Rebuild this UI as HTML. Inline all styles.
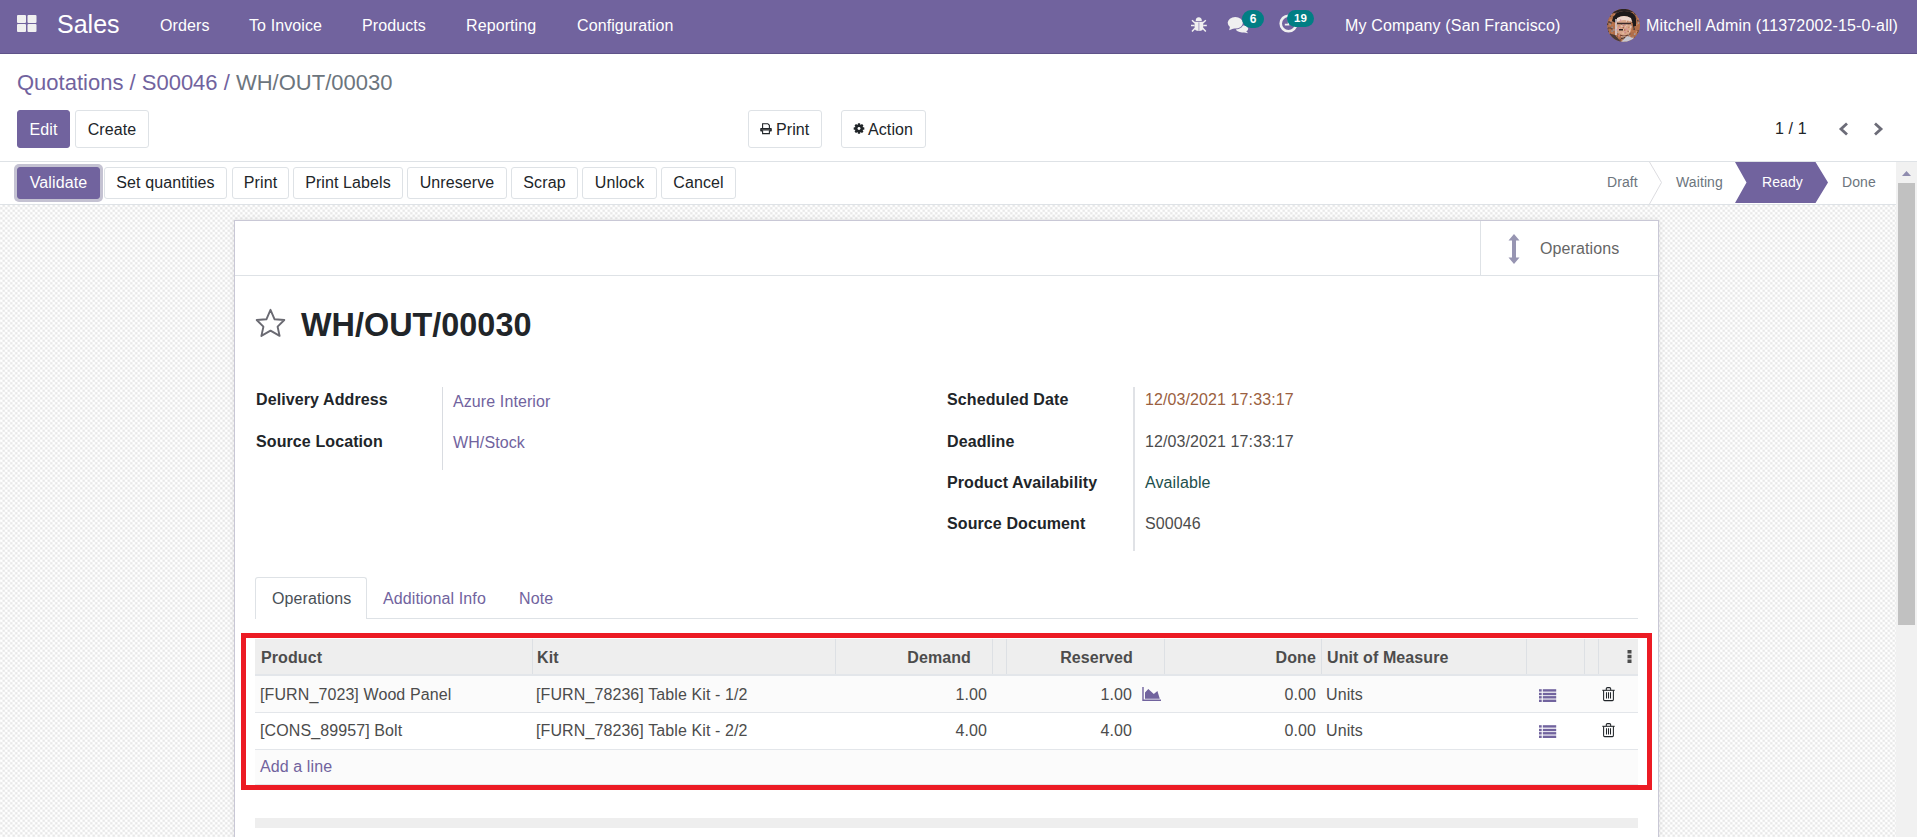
<!DOCTYPE html>
<html><head><meta charset="utf-8">
<style>
*{box-sizing:border-box;margin:0;padding:0}
html,body{width:1917px;height:837px;overflow:hidden;background:#fff;font-family:"Liberation Sans",sans-serif;font-size:16px;color:#212529;letter-spacing:0.1px}
.a{position:absolute;white-space:nowrap}
#nav{position:absolute;left:0;top:0;width:1917px;height:54px;background:#71639e;border-bottom:1px solid #5f5389;color:#fff}
#nav .a{color:#fff}
#cp{position:absolute;left:0;top:54px;width:1917px;height:108px;background:#fff;border-bottom:1px solid #dee2e6}
.btn{position:absolute;height:38px;border:1px solid #dee2e6;border-radius:3px;background:#fff;color:#212529;font-size:16px;line-height:36px;padding-top:1px;text-align:center;white-space:nowrap}
.btnp{background:#71639e;border-color:#71639e;color:#fff}
.sb .btn{height:32px;line-height:30px;padding-top:0}
#content{position:absolute;left:0;top:162px;width:1896px;height:675px;background-color:#f6f6f6;background-color:#f6f6f6;background-image:radial-gradient(circle at 1.25px 1.25px,#e8e8e8 0.5px,rgba(232,232,232,0) 1.7px),radial-gradient(circle at 3.75px 3.75px,#e8e8e8 0.5px,rgba(232,232,232,0) 1.7px),radial-gradient(circle at 3.75px 1.25px,#fff 0.5px,rgba(255,255,255,0) 1.7px),radial-gradient(circle at 1.25px 3.75px,#fff 0.5px,rgba(255,255,255,0) 1.7px);background-size:5px 5px}
#sbar{position:absolute;left:0;top:162px;width:1896px;height:43px;background:#fff;border-bottom:1px solid #dee2e6}
#scroll{position:absolute;left:1896px;top:162px;width:21px;height:675px;background:#f1f1f1}
#sheet{position:absolute;left:234px;top:220px;width:1425px;height:640px;background:#fff;border:1px solid #c9c8d6;box-shadow:0 0 6px rgba(0,0,0,.09)}
.lbl{position:absolute;font-weight:bold;color:#212529;white-space:nowrap}
.val{position:absolute;color:#4c4c4c;white-space:nowrap}
.th{position:absolute;font-weight:bold;color:#4c4c4c;white-space:nowrap}
.td{position:absolute;color:#4c4c4c;white-space:nowrap}
</style></head><body>
<div id="nav">
  <svg class="a" style="left:17px;top:15px" width="20" height="17" viewBox="0 0 20 17"><rect x="0" y="0" width="9" height="8" rx="1" fill="#f0f0f0"/><rect x="10.5" y="0" width="9" height="8" rx="1" fill="#f0f0f0"/><rect x="0" y="9" width="9" height="8" rx="1" fill="#f0f0f0"/><rect x="10.5" y="9" width="9" height="8" rx="1" fill="#f0f0f0"/></svg>
  <div class="a" style="left:57px;top:10px;font-size:25px;letter-spacing:0">Sales</div>
  <div class="a" style="left:160px;top:17px">Orders</div>
  <div class="a" style="left:249px;top:17px">To Invoice</div>
  <div class="a" style="left:362px;top:17px">Products</div>
  <div class="a" style="left:466px;top:17px">Reporting</div>
  <div class="a" style="left:577px;top:17px">Configuration</div>
  <svg class="a" style="left:1190px;top:16px" width="18" height="17" viewBox="0 0 18 17"><path d="M5.7 4.9 Q5.7 1.2 8.75 1.2 Q11.8 1.2 11.8 4.9 Z" fill="#f0f0f0"/><path d="M4.6 5.7 H13.2 V12 Q13.2 14.9 8.9 14.9 Q4.6 14.9 4.6 12 Z" fill="#f0f0f0"/><rect x="8.4" y="6.4" width="1" height="8.5" fill="#a89fc6"/><path d="M5 7 L2 4.2 M12.8 7 L15.8 4.2 M4.6 9.6 L1 9.6 M13.2 9.6 L16.8 9.6 M5 12.3 L2 15.5 M12.8 12.3 L15.8 15.5" stroke="#f0f0f0" stroke-width="1.5"/></svg>
  <svg class="a" style="left:1227px;top:15px" width="22" height="19" viewBox="0 0 22 19"><ellipse cx="15" cy="13.8" rx="6.2" ry="3.6" fill="#f0f0f0"/><path d="M18.5 15.5 L21.2 18.3 L14.5 17 Z" fill="#f0f0f0"/><ellipse cx="8.3" cy="7.8" rx="8.6" ry="6.6" fill="#71639e"/><ellipse cx="8.3" cy="7.8" rx="7.6" ry="5.8" fill="#f0f0f0"/><path d="M3 11.5 L2.2 15.3 L7.8 13 Z" fill="#f0f0f0"/></svg>
  <div class="a" style="left:1242px;top:10px;width:22px;height:18px;border-radius:9px;background:#017e84;color:#fff;font-size:12px;font-weight:bold;text-align:center;line-height:19px;letter-spacing:0">6</div>
  <svg class="a" style="left:1279px;top:14px" width="19" height="19" viewBox="0 0 19 19"><circle cx="9.5" cy="9.5" r="7.8" fill="none" stroke="#f0f0f0" stroke-width="2.6"/><path d="M5.8 10.6 H9.6 V5" stroke="#f0f0f0" stroke-width="1.6" fill="none"/></svg>
  <div class="a" style="left:1287px;top:10px;width:27px;height:17px;border-radius:8.5px;background:#017e84;color:#fff;font-size:11.5px;font-weight:bold;text-align:center;line-height:17px;letter-spacing:0">19</div>
  <svg class="a" style="left:1607px;top:8.5px" width="34" height="33" viewBox="0 0 34 33"><defs><clipPath id="av"><circle cx="16.6" cy="16.3" r="16.4"/></clipPath></defs><g clip-path="url(#av)"><rect width="34" height="33" fill="#b06e4a"/><rect x="10.3" y="4.1" width="1.5" height="1.5" fill="#c27a50"/><rect x="0.7" y="26.9" width="1.5" height="1.5" fill="#8c8c96"/><rect x="11.8" y="1.0" width="1.5" height="1.5" fill="#a0a0aa"/><rect x="6.5" y="1.9" width="1.5" height="1.5" fill="#5a4a48"/><rect x="1.4" y="2.1" width="1.5" height="1.5" fill="#5a4a48"/><rect x="1.1" y="18.2" width="1.5" height="1.5" fill="#6e4a3a"/><rect x="21.1" y="18.8" width="1.5" height="1.5" fill="#8c8c96"/><rect x="19.2" y="12.5" width="1.5" height="1.5" fill="#6e4a3a"/><rect x="0.6" y="28.2" width="1.5" height="1.5" fill="#d08a5e"/><rect x="13.7" y="17.4" width="1.5" height="1.5" fill="#a0a0aa"/><rect x="9.8" y="26.7" width="1.5" height="1.5" fill="#6e4a3a"/><rect x="2.6" y="18.4" width="1.5" height="1.5" fill="#6e4a3a"/><rect x="12.0" y="17.6" width="1.5" height="1.5" fill="#8c8c96"/><rect x="18.8" y="20.0" width="1.5" height="1.5" fill="#5a4a48"/><rect x="22.8" y="13.5" width="1.5" height="1.5" fill="#d08a5e"/><rect x="15.3" y="30.4" width="1.5" height="1.5" fill="#d08a5e"/><rect x="9.5" y="26.0" width="1.5" height="1.5" fill="#c27a50"/><rect x="26.3" y="1.8" width="1.5" height="1.5" fill="#d08a5e"/><rect x="17.4" y="28.8" width="1.5" height="1.5" fill="#c27a50"/><rect x="14.7" y="19.7" width="1.5" height="1.5" fill="#8c8c96"/><rect x="3.1" y="13.2" width="1.5" height="1.5" fill="#3a3030"/><rect x="11.0" y="30.7" width="1.5" height="1.5" fill="#5a4a48"/><rect x="0.4" y="21.7" width="1.5" height="1.5" fill="#3a3030"/><rect x="18.5" y="25.8" width="1.5" height="1.5" fill="#3a3030"/><rect x="10.0" y="22.6" width="1.5" height="1.5" fill="#a0a0aa"/><rect x="16.4" y="26.1" width="1.5" height="1.5" fill="#8c8c96"/><rect x="28.4" y="31.1" width="1.5" height="1.5" fill="#5a4a48"/><rect x="23.4" y="1.2" width="1.5" height="1.5" fill="#c27a50"/><rect x="23.6" y="21.0" width="1.5" height="1.5" fill="#c27a50"/><rect x="27.8" y="8.7" width="1.5" height="1.5" fill="#5a4a48"/><rect x="30.0" y="10.8" width="1.5" height="1.5" fill="#5a4a48"/><rect x="11.4" y="19.8" width="1.5" height="1.5" fill="#5a4a48"/><rect x="1.1" y="25.1" width="1.5" height="1.5" fill="#6e4a3a"/><rect x="24.8" y="12.5" width="1.5" height="1.5" fill="#3a3030"/><rect x="16.4" y="4.7" width="1.5" height="1.5" fill="#5a4a48"/><rect x="18.2" y="29.0" width="1.5" height="1.5" fill="#3a3030"/><rect x="14.1" y="17.7" width="1.5" height="1.5" fill="#c27a50"/><rect x="13.5" y="11.2" width="1.5" height="1.5" fill="#5a4a48"/><rect x="32.5" y="4.1" width="1.5" height="1.5" fill="#6e4a3a"/><rect x="4.3" y="21.4" width="1.5" height="1.5" fill="#8c8c96"/><rect x="16.0" y="19.0" width="1.5" height="1.5" fill="#d08a5e"/><rect x="8.9" y="4.0" width="1.5" height="1.5" fill="#a0a0aa"/><rect x="11.9" y="18.3" width="1.5" height="1.5" fill="#6e4a3a"/><rect x="23.2" y="16.5" width="1.5" height="1.5" fill="#a0a0aa"/><rect x="21.9" y="24.2" width="1.5" height="1.5" fill="#5a4a48"/><rect x="30.5" y="25.5" width="1.5" height="1.5" fill="#3a3030"/><rect x="22.8" y="18.0" width="1.5" height="1.5" fill="#5a4a48"/><rect x="13.0" y="2.5" width="1.5" height="1.5" fill="#c27a50"/><rect x="13.0" y="5.5" width="1.5" height="1.5" fill="#6e4a3a"/><rect x="14.4" y="2.7" width="1.5" height="1.5" fill="#a0a0aa"/><rect x="0.8" y="-1.0" width="1.5" height="1.5" fill="#6e4a3a"/><rect x="17.8" y="31.3" width="1.5" height="1.5" fill="#a0a0aa"/><rect x="-0.1" y="28.7" width="1.5" height="1.5" fill="#a0a0aa"/><rect x="12.2" y="20.6" width="1.5" height="1.5" fill="#d08a5e"/><rect x="20.1" y="15.1" width="1.5" height="1.5" fill="#8c8c96"/><rect x="28.7" y="32.8" width="1.5" height="1.5" fill="#5a4a48"/><rect x="15.8" y="9.6" width="1.5" height="1.5" fill="#6e4a3a"/><rect x="2.6" y="10.6" width="1.5" height="1.5" fill="#d08a5e"/><rect x="15.8" y="22.5" width="1.5" height="1.5" fill="#a0a0aa"/><rect x="-0.2" y="31.3" width="1.5" height="1.5" fill="#a0a0aa"/><rect x="11.7" y="22.5" width="1.5" height="1.5" fill="#8c8c96"/><rect x="25.5" y="9.1" width="1.5" height="1.5" fill="#c27a50"/><rect x="29.2" y="22.7" width="1.5" height="1.5" fill="#d08a5e"/><rect x="17.1" y="29.9" width="1.5" height="1.5" fill="#d08a5e"/><rect x="26.0" y="17.1" width="1.5" height="1.5" fill="#3a3030"/><rect x="16.6" y="20.6" width="1.5" height="1.5" fill="#a0a0aa"/><rect x="27.4" y="32.5" width="1.5" height="1.5" fill="#3a3030"/><rect x="5.8" y="7.1" width="1.5" height="1.5" fill="#5a4a48"/><rect x="24.9" y="6.7" width="1.5" height="1.5" fill="#a0a0aa"/><rect x="16.2" y="23.9" width="1.5" height="1.5" fill="#8c8c96"/><rect x="26.7" y="15.1" width="1.5" height="1.5" fill="#6e4a3a"/><rect x="23.2" y="31.5" width="1.5" height="1.5" fill="#5a4a48"/><rect x="27.3" y="23.6" width="1.5" height="1.5" fill="#d08a5e"/><rect x="32.4" y="11.4" width="1.5" height="1.5" fill="#6e4a3a"/><rect x="2.6" y="15.0" width="1.5" height="1.5" fill="#d08a5e"/><rect x="6.2" y="20.2" width="1.5" height="1.5" fill="#a0a0aa"/><rect x="28.4" y="15.3" width="1.5" height="1.5" fill="#c27a50"/><rect x="11.0" y="20.9" width="1.5" height="1.5" fill="#3a3030"/><rect x="22.1" y="29.9" width="1.5" height="1.5" fill="#3a3030"/><rect x="23.9" y="5.8" width="1.5" height="1.5" fill="#6e4a3a"/><rect x="14.2" y="20.6" width="1.5" height="1.5" fill="#8c8c96"/><rect x="27.0" y="32.0" width="1.5" height="1.5" fill="#5a4a48"/><rect x="15.2" y="24.3" width="1.5" height="1.5" fill="#8c8c96"/><rect x="24.4" y="4.8" width="1.5" height="1.5" fill="#6e4a3a"/><rect x="-0.0" y="19.1" width="1.5" height="1.5" fill="#5a4a48"/><rect x="27.2" y="4.0" width="1.5" height="1.5" fill="#3a3030"/><rect x="19.9" y="15.1" width="1.5" height="1.5" fill="#d08a5e"/><rect x="4.5" y="17.6" width="1.5" height="1.5" fill="#8c8c96"/><rect x="-0.5" y="32.0" width="1.5" height="1.5" fill="#c27a50"/><rect x="2.6" y="24.5" width="1.5" height="1.5" fill="#6e4a3a"/><rect x="14.2" y="28.6" width="1.5" height="1.5" fill="#3a3030"/><rect x="29.6" y="-0.0" width="1.5" height="1.5" fill="#6e4a3a"/><rect x="9.3" y="7.2" width="1.5" height="1.5" fill="#a0a0aa"/><rect x="10.4" y="17.5" width="1.5" height="1.5" fill="#3a3030"/><rect x="3.6" y="29.9" width="1.5" height="1.5" fill="#d08a5e"/><rect x="30.4" y="21.5" width="1.5" height="1.5" fill="#3a3030"/><rect x="30.7" y="13.3" width="1.5" height="1.5" fill="#a0a0aa"/><rect x="3.6" y="4.2" width="1.5" height="1.5" fill="#a0a0aa"/><rect x="-0.3" y="14.0" width="1.5" height="1.5" fill="#6e4a3a"/><rect x="20.3" y="25.4" width="1.5" height="1.5" fill="#6e4a3a"/><rect x="5.0" y="15.1" width="1.5" height="1.5" fill="#c27a50"/><rect x="3.2" y="1.1" width="1.5" height="1.5" fill="#c27a50"/><rect x="17.1" y="17.9" width="1.5" height="1.5" fill="#3a3030"/><rect x="26.2" y="29.0" width="1.5" height="1.5" fill="#8c8c96"/><rect x="7.7" y="8.4" width="1.5" height="1.5" fill="#3a3030"/><rect x="2.4" y="14.4" width="1.5" height="1.5" fill="#8c8c96"/><rect x="25.6" y="30.0" width="1.5" height="1.5" fill="#5a4a48"/><rect x="10.4" y="32.1" width="1.5" height="1.5" fill="#a0a0aa"/><rect x="16.9" y="22.6" width="1.5" height="1.5" fill="#5a4a48"/><rect x="16.8" y="26.5" width="1.5" height="1.5" fill="#a0a0aa"/><rect x="32.0" y="22.8" width="1.5" height="1.5" fill="#d08a5e"/><rect x="31.3" y="29.4" width="1.5" height="1.5" fill="#6e4a3a"/><rect x="28.4" y="3.7" width="1.5" height="1.5" fill="#8c8c96"/><rect x="12.7" y="9.7" width="1.5" height="1.5" fill="#c27a50"/><rect x="7.4" y="1.5" width="1.5" height="1.5" fill="#c27a50"/><rect x="9.6" y="3.2" width="1.5" height="1.5" fill="#3a3030"/><rect x="4.4" y="23.3" width="1.5" height="1.5" fill="#c27a50"/><rect x="11.8" y="7.6" width="1.5" height="1.5" fill="#6e4a3a"/><rect x="32.9" y="6.5" width="1.5" height="1.5" fill="#8c8c96"/><rect x="12.9" y="15.6" width="1.5" height="1.5" fill="#c27a50"/><rect x="28.1" y="4.5" width="1.5" height="1.5" fill="#5a4a48"/><rect x="33.8" y="12.7" width="1.5" height="1.5" fill="#5a4a48"/><rect x="5.9" y="9.8" width="1.5" height="1.5" fill="#c27a50"/><rect x="11.8" y="10.5" width="1.5" height="1.5" fill="#5a4a48"/><rect x="14.4" y="-0.4" width="1.5" height="1.5" fill="#d08a5e"/><rect x="17.1" y="9.0" width="1.5" height="1.5" fill="#8c8c96"/><rect x="2.9" y="30.2" width="1.5" height="1.5" fill="#6e4a3a"/><rect x="33.0" y="2.6" width="1.5" height="1.5" fill="#d08a5e"/><rect x="8.5" y="29.8" width="1.5" height="1.5" fill="#6e4a3a"/><rect x="8.5" y="3.4" width="1.5" height="1.5" fill="#5a4a48"/><rect x="28.7" y="22.0" width="1.5" height="1.5" fill="#d08a5e"/><rect x="13.2" y="17.2" width="1.5" height="1.5" fill="#a0a0aa"/><rect x="19.0" y="22.8" width="1.5" height="1.5" fill="#8c8c96"/><rect x="8.8" y="26.2" width="1.5" height="1.5" fill="#6e4a3a"/><rect x="13.9" y="1.5" width="1.5" height="1.5" fill="#8c8c96"/><rect x="21.2" y="26.3" width="1.5" height="1.5" fill="#8c8c96"/><rect x="20.3" y="6.6" width="1.5" height="1.5" fill="#d08a5e"/><rect x="29.2" y="14.4" width="1.5" height="1.5" fill="#d08a5e"/><rect x="33.8" y="13.2" width="1.5" height="1.5" fill="#d08a5e"/><rect x="20.8" y="0.5" width="1.5" height="1.5" fill="#c27a50"/><rect x="7.3" y="2.7" width="1.5" height="1.5" fill="#6e4a3a"/><rect x="8.2" y="5.2" width="1.5" height="1.5" fill="#d08a5e"/><rect x="21.0" y="17.1" width="1.5" height="1.5" fill="#6e4a3a"/><rect x="9.1" y="16.0" width="1.5" height="1.5" fill="#6e4a3a"/><rect x="8.5" y="26.3" width="1.5" height="1.5" fill="#d08a5e"/><rect x="0.3" y="-0.4" width="1.5" height="1.5" fill="#a0a0aa"/><rect x="18.3" y="5.4" width="1.5" height="1.5" fill="#5a4a48"/><rect x="7.6" y="14.2" width="1.5" height="1.5" fill="#c27a50"/><rect x="27.7" y="13.7" width="1.5" height="1.5" fill="#5a4a48"/><rect x="18.1" y="29.2" width="1.5" height="1.5" fill="#a0a0aa"/><rect x="9.8" y="6.3" width="1.5" height="1.5" fill="#6e4a3a"/><rect x="11.0" y="27.3" width="1.5" height="1.5" fill="#c27a50"/><rect x="24.5" y="3.8" width="1.5" height="1.5" fill="#d08a5e"/><rect x="33.4" y="27.5" width="1.5" height="1.5" fill="#8c8c96"/><rect x="1.5" y="24.2" width="1.5" height="1.5" fill="#d08a5e"/><rect x="14.1" y="0.9" width="1.5" height="1.5" fill="#c27a50"/><rect x="28.4" y="28.6" width="1.5" height="1.5" fill="#c27a50"/><rect x="33.0" y="19.4" width="1.5" height="1.5" fill="#c27a50"/><rect x="9.3" y="14.6" width="1.5" height="1.5" fill="#6e4a3a"/><rect x="8.4" y="-0.9" width="1.5" height="1.5" fill="#d08a5e"/><rect x="32.7" y="32.1" width="1.5" height="1.5" fill="#a0a0aa"/><rect x="10.3" y="0.2" width="1.5" height="1.5" fill="#d08a5e"/><rect x="6.6" y="5.2" width="1.5" height="1.5" fill="#d08a5e"/><rect x="12.4" y="15.1" width="1.5" height="1.5" fill="#a0a0aa"/><rect x="22.0" y="7.4" width="1.5" height="1.5" fill="#3a3030"/><rect x="-0.8" y="8.0" width="1.5" height="1.5" fill="#8c8c96"/><rect x="4.0" y="19.0" width="1.5" height="1.5" fill="#5a4a48"/><rect x="-0.2" y="9.3" width="1.5" height="1.5" fill="#6e4a3a"/><rect x="2.0" y="31.6" width="1.5" height="1.5" fill="#3a3030"/><rect x="25.3" y="21.4" width="1.5" height="1.5" fill="#c27a50"/><rect x="26.4" y="19.3" width="1.5" height="1.5" fill="#3a3030"/><rect x="10.4" y="32.5" width="1.5" height="1.5" fill="#6e4a3a"/><rect x="8.9" y="20.0" width="1.5" height="1.5" fill="#6e4a3a"/><rect x="0.5" y="27.4" width="1.5" height="1.5" fill="#a0a0aa"/><rect x="21.0" y="24.0" width="1.5" height="1.5" fill="#3a3030"/><rect x="16.7" y="29.9" width="1.5" height="1.5" fill="#3a3030"/><rect x="16.7" y="27.4" width="1.5" height="1.5" fill="#3a3030"/><rect x="-0.4" y="22.3" width="1.5" height="1.5" fill="#3a3030"/><rect x="30.2" y="22.2" width="1.5" height="1.5" fill="#c27a50"/><rect x="21.5" y="1.9" width="1.5" height="1.5" fill="#8c8c96"/><rect x="3.7" y="11.3" width="1.5" height="1.5" fill="#8c8c96"/><rect x="12.2" y="14.3" width="1.5" height="1.5" fill="#8c8c96"/><rect x="21.0" y="20.3" width="1.5" height="1.5" fill="#c27a50"/><rect x="7.6" y="8.0" width="1.5" height="1.5" fill="#5a4a48"/><rect x="26.9" y="24.4" width="1.5" height="1.5" fill="#a0a0aa"/><rect x="30.4" y="2.1" width="1.5" height="1.5" fill="#a0a0aa"/><rect x="1.3" y="24.1" width="1.5" height="1.5" fill="#d08a5e"/><rect x="27.3" y="27.8" width="1.5" height="1.5" fill="#6e4a3a"/><rect x="24.5" y="6.0" width="1.5" height="1.5" fill="#c27a50"/><rect x="21.7" y="14.7" width="1.5" height="1.5" fill="#3a3030"/><rect x="12.4" y="15.3" width="1.5" height="1.5" fill="#c27a50"/><rect x="9.1" y="0.6" width="1.5" height="1.5" fill="#c27a50"/><rect x="21.5" y="1.6" width="1.5" height="1.5" fill="#6e4a3a"/><rect x="10.6" y="21.2" width="1.5" height="1.5" fill="#c27a50"/><rect x="9.7" y="18.3" width="1.5" height="1.5" fill="#8c8c96"/><rect x="15.9" y="15.5" width="1.5" height="1.5" fill="#c27a50"/><rect x="2.5" y="6.4" width="1.5" height="1.5" fill="#5a4a48"/><rect x="9.2" y="16.6" width="1.5" height="1.5" fill="#5a4a48"/><rect x="15.3" y="25.1" width="1.5" height="1.5" fill="#a0a0aa"/><rect x="6.0" y="32.3" width="1.5" height="1.5" fill="#5a4a48"/><rect x="-0.4" y="14.6" width="1.5" height="1.5" fill="#3a3030"/><rect x="16.7" y="32.8" width="1.5" height="1.5" fill="#d08a5e"/><rect x="12.5" y="30.2" width="1.5" height="1.5" fill="#6e4a3a"/><rect x="1.6" y="2.1" width="1.5" height="1.5" fill="#c27a50"/><rect x="17.3" y="31.4" width="1.5" height="1.5" fill="#6e4a3a"/><rect x="20.1" y="20.5" width="1.5" height="1.5" fill="#d08a5e"/><rect x="30.0" y="22.9" width="1.5" height="1.5" fill="#6e4a3a"/><rect x="16.4" y="28.8" width="1.5" height="1.5" fill="#5a4a48"/><rect x="-0.1" y="-0.9" width="1.5" height="1.5" fill="#5a4a48"/><rect x="22.9" y="12.8" width="1.5" height="1.5" fill="#c27a50"/><rect x="3.9" y="10.7" width="1.5" height="1.5" fill="#d08a5e"/><rect x="3.2" y="10.3" width="1.5" height="1.5" fill="#d08a5e"/><rect x="25.3" y="27.5" width="1.5" height="1.5" fill="#8c8c96"/><rect x="31.9" y="5.7" width="1.5" height="1.5" fill="#8c8c96"/><rect x="30.6" y="8.9" width="1.5" height="1.5" fill="#d08a5e"/><rect x="1.3" y="12.3" width="1.5" height="1.5" fill="#3a3030"/><rect x="19.6" y="11.3" width="1.5" height="1.5" fill="#5a4a48"/><rect x="25.4" y="28.0" width="1.5" height="1.5" fill="#d08a5e"/><rect x="2.6" y="27.4" width="1.5" height="1.5" fill="#d08a5e"/><rect x="21.2" y="4.1" width="1.5" height="1.5" fill="#d08a5e"/><path d="M0 24 L0 33 L14 33 L8 26 Z" fill="#4a3a38"/><path d="M5 12 Q7 2 17 2 Q28 2 29 10 L29 17 L26 17 Q26 7 17 7 Q10 7 9 14 Z" fill="#1e1a1a"/><path d="M2 0 H32 V5 Q17 -1 2 6 Z" fill="#2a2222"/><ellipse cx="17" cy="18" rx="7.5" ry="10" fill="#d8a68a"/><path d="M10 9 Q17 5 24 9 L25 13 Q17 9 10 13 Z" fill="#ecd6cc"/><rect x="16.1" y="15.7" width="1.4" height="1.4" fill="#a86a50"/><rect x="21.0" y="17.7" width="1.4" height="1.4" fill="#c48a6a"/><rect x="21.4" y="21.4" width="1.4" height="1.4" fill="#f0d8d0"/><rect x="17.7" y="23.0" width="1.4" height="1.4" fill="#c48a6a"/><rect x="23.1" y="17.4" width="1.4" height="1.4" fill="#f0d8d0"/><rect x="20.5" y="21.6" width="1.4" height="1.4" fill="#a86a50"/><rect x="16.8" y="26.4" width="1.4" height="1.4" fill="#f0d8d0"/><rect x="11.8" y="18.5" width="1.4" height="1.4" fill="#a86a50"/><rect x="13.9" y="14.6" width="1.4" height="1.4" fill="#a86a50"/><rect x="15.7" y="14.3" width="1.4" height="1.4" fill="#d890a0"/><rect x="17.8" y="17.1" width="1.4" height="1.4" fill="#e8c0a8"/><rect x="19.0" y="11.4" width="1.4" height="1.4" fill="#f0d8d0"/><rect x="22.7" y="18.9" width="1.4" height="1.4" fill="#e8c0a8"/><rect x="16.3" y="16.0" width="1.4" height="1.4" fill="#d890a0"/><rect x="16.0" y="19.9" width="1.4" height="1.4" fill="#e8c0a8"/><rect x="11.3" y="16.2" width="1.4" height="1.4" fill="#c48a6a"/><rect x="14.5" y="16.6" width="1.4" height="1.4" fill="#f0d8d0"/><rect x="12.8" y="10.4" width="1.4" height="1.4" fill="#d890a0"/><rect x="15.4" y="23.4" width="1.4" height="1.4" fill="#e8c0a8"/><rect x="15.3" y="16.1" width="1.4" height="1.4" fill="#c48a6a"/><rect x="17.0" y="20.3" width="1.4" height="1.4" fill="#a86a50"/><rect x="11.8" y="19.1" width="1.4" height="1.4" fill="#e8c0a8"/><rect x="11.3" y="26.1" width="1.4" height="1.4" fill="#d890a0"/><rect x="15.6" y="18.0" width="1.4" height="1.4" fill="#a86a50"/><rect x="21.9" y="25.7" width="1.4" height="1.4" fill="#c48a6a"/><rect x="11.8" y="17.7" width="1.4" height="1.4" fill="#d890a0"/><rect x="23.6" y="18.8" width="1.4" height="1.4" fill="#c48a6a"/><rect x="15.5" y="26.7" width="1.4" height="1.4" fill="#f0d8d0"/><rect x="22.0" y="27.5" width="1.4" height="1.4" fill="#e8c0a8"/><rect x="21.0" y="14.0" width="1.4" height="1.4" fill="#e8c0a8"/><rect x="17.3" y="22.3" width="1.4" height="1.4" fill="#d890a0"/><rect x="11.2" y="24.0" width="1.4" height="1.4" fill="#c48a6a"/><rect x="21.0" y="14.2" width="1.4" height="1.4" fill="#c48a6a"/><rect x="19.0" y="15.5" width="1.4" height="1.4" fill="#e8c0a8"/><rect x="18.8" y="19.5" width="1.4" height="1.4" fill="#d890a0"/><rect x="19.8" y="12.0" width="1.4" height="1.4" fill="#c48a6a"/><rect x="14.2" y="27.0" width="1.4" height="1.4" fill="#e8c0a8"/><rect x="15.4" y="14.0" width="1.4" height="1.4" fill="#f0d8d0"/><rect x="10.0" y="19.7" width="1.4" height="1.4" fill="#d890a0"/><rect x="13.9" y="15.7" width="1.4" height="1.4" fill="#e8c0a8"/><path d="M10 14.5 H24" stroke="#3a2a2a" stroke-width="1.6"/><rect x="12" y="20" width="4" height="1.5" fill="#2a2020"/><path d="M13 26 Q17 28 21 26" stroke="#6a3a2a" stroke-width="1.2" fill="none"/><path d="M14 33 L20 27 L26 29 L28 33 Z" fill="#c8c8d2"/><path d="M9 10 V26" stroke="#e8e0e8" stroke-width="1.4"/></g></svg>
  <div class="a" style="left:1345px;top:17px;letter-spacing:0.15px">My Company (San Francisco)</div>
  <div class="a" style="left:1646px;top:17px;letter-spacing:0.15px">Mitchell Admin (11372002-15-0-all)</div>
</div>
<div id="cp">
  <div class="a" style="left:17px;top:16px;font-size:22px;color:#71639e;letter-spacing:0">Quotations / S00046 / <span style="color:#6c757d">WH/OUT/00030</span></div>
  <div class="btn btnp" style="left:17px;top:56px;width:53px">Edit</div>
  <div class="btn" style="left:75px;top:56px;width:74px">Create</div>
  <div class="btn" style="left:748px;top:56px;width:74px;text-align:left;padding-left:27px">Print</div>
  <svg class="a" style="left:760px;top:68.5px" width="12" height="12" viewBox="0 0 12 12"><path d="M2.6 5 V0.7 H7.8 L9.4 2.3 V5" fill="#fff" stroke="#212529" stroke-width="1.1"/><rect x="0.2" y="5" width="11.6" height="3.6" rx="0.8" fill="#212529"/><path d="M2.6 7.5 V10.6 H9.4 V7.5" fill="#fff" stroke="#212529" stroke-width="1.1"/><rect x="1.5" y="6" width="9" height="0.8" fill="#555"/></svg>
  <div class="btn" style="left:841px;top:56px;width:85px;text-align:left;padding-left:26px">Action</div>
  <svg class="a" style="left:853px;top:69px" width="12" height="11" viewBox="0 0 12 12"><g fill="#212529"><circle cx="6" cy="6" r="4.3"/><rect x="4.7" y="0.2" width="2.6" height="11.6" rx="0.6" transform="rotate(0 6 6)"/><rect x="4.7" y="0.2" width="2.6" height="11.6" rx="0.6" transform="rotate(45 6 6)"/><rect x="4.7" y="0.2" width="2.6" height="11.6" rx="0.6" transform="rotate(90 6 6)"/><rect x="4.7" y="0.2" width="2.6" height="11.6" rx="0.6" transform="rotate(135 6 6)"/></g><circle cx="6" cy="6" r="1.6" fill="#fff"/></svg>
  <svg class="a" style="left:1838px;top:68px" width="11" height="14" viewBox="0 0 11 14"><path d="M9 1.5 L3 7 L9 12.5" fill="none" stroke="#6c6c78" stroke-width="2.8"/></svg>
  <svg class="a" style="left:1873px;top:68px" width="11" height="14" viewBox="0 0 11 14"><path d="M2 1.5 L8 7 L2 12.5" fill="none" stroke="#6c6c78" stroke-width="2.8"/></svg>
  <div class="a" style="left:1775px;top:66px">1 / 1</div>
</div>
<div id="content"></div>
<div id="sbar" class="sb">
  <div class="a" style="left:14px;top:2px;width:89px;height:38px;border-radius:5px;background:#c4c2d2"></div>
  <div class="btn btnp" style="left:17px;top:5px;width:83px">Validate</div>
  <div class="btn" style="left:104px;top:5px;width:123px">Set quantities</div>
  <div class="btn" style="left:232px;top:5px;width:57px">Print</div>
  <div class="btn" style="left:293px;top:5px;width:110px">Print Labels</div>
  <div class="btn" style="left:407px;top:5px;width:100px">Unreserve</div>
  <div class="btn" style="left:511px;top:5px;width:67px">Scrap</div>
  <div class="btn" style="left:582px;top:5px;width:75px">Unlock</div>
  <div class="btn" style="left:661px;top:5px;width:75px">Cancel</div>
  <svg class="a" style="left:1649px;top:0px" width="14" height="42" viewBox="0 0 14 42"><path d="M0.5 0 L12.5 20.5 L0.5 42" fill="none" stroke="#dcdce0" stroke-width="1"/></svg>
  <svg class="a" style="left:1734px;top:0px" width="95" height="41" viewBox="0 0 95 41"><path d="M1 0 H81.5 L94 20.5 L81.5 41 H1 L12.5 20.5 Z" fill="#71639e"/></svg>
  <div class="a" style="left:1607px;top:173px;font-size:14px;color:#6c757d;position:absolute"></div>
  <div class="a" style="left:1607px;top:12px;font-size:14px;color:#6c757d">Draft</div>
  <div class="a" style="left:1676px;top:12px;font-size:14px;color:#6c757d">Waiting</div>
  <div class="a" style="left:1762px;top:12px;font-size:14px;color:#fff">Ready</div>
  <div class="a" style="left:1842px;top:12px;font-size:14px;color:#6c757d">Done</div>
</div>
<div id="scroll"><svg class="a" style="left:6px;top:9px" width="9" height="5" viewBox="0 0 9 5"><path d="M4.5 0 L9 5 H0 Z" fill="#8f8caf"/></svg><div class="a" style="left:2px;top:21px;width:17px;height:442px;background:#c1c1c1"></div></div>
<div id="sheet"></div>
<div id="bbox" class="a" style="left:235px;top:221px;width:1423px;height:55px;border-bottom:1px solid #dee2e6"></div>
<div class="a" style="left:1480px;top:221px;width:1px;height:54px;background:#dee2e6"></div>
<svg class="a" style="left:1508px;top:234px" width="12" height="30" viewBox="0 0 12 30"><path d="M6 0 L11.5 6.5 L8 6.5 L8 23.5 L11.5 23.5 L6 30 L0.5 23.5 L4 23.5 L4 6.5 L0.5 6.5 Z" fill="#9795b2"/></svg>
<div class="a" style="left:1540px;top:240px;color:#666">Operations</div>
<svg class="a" style="left:255px;top:308px" width="31" height="30" viewBox="0 0 31 30"><path d="M15.5 1.8 L19.6 11.3 L29.3 12 L22.6 18.7 L24.6 27.9 L15.5 22.6 L6.4 27.9 L8.4 18.7 L1.7 12 L11.4 11.3 Z" fill="none" stroke="#6a6a72" stroke-width="1.9" stroke-linejoin="round"/></svg>
<div class="a" style="left:301px;top:307px;letter-spacing:0;font-size:32.4px;font-weight:bold;color:#212529">WH/OUT/00030</div>
<div class="lbl" style="left:256px;top:391px">Delivery Address</div>
<div class="lbl" style="left:256px;top:433px">Source Location</div>
<div class="a" style="left:442px;top:387px;width:1px;height:83px;background:#d9dce1"></div>
<div class="val" style="left:453px;top:393px;color:#71639e">Azure Interior</div>
<div class="val" style="left:453px;top:434px;color:#71639e">WH/Stock</div>
<div class="lbl" style="left:947px;top:391px">Scheduled Date</div>
<div class="lbl" style="left:947px;top:433px">Deadline</div>
<div class="lbl" style="left:947px;top:474px">Product Availability</div>
<div class="lbl" style="left:947px;top:515px">Source Document</div>
<div class="a" style="left:1133px;top:387px;width:2px;height:164px;background:#e0e2e6"></div>
<div class="val" style="left:1145px;top:391px;color:#9a6040">12/03/2021 17:33:17</div>
<div class="val" style="left:1145px;top:433px">12/03/2021 17:33:17</div>
<div class="val" style="left:1145px;top:474px;color:#1d4f4c">Available</div>
<div class="val" style="left:1145px;top:515px">S00046</div>
<div class="a" style="left:255px;top:618px;width:1383px;height:1px;background:#dee2e6"></div>
<div class="a" style="left:255px;top:577px;width:112px;height:42px;background:#fff;border:1px solid #dee2e6;border-bottom:none;border-radius:3px 3px 0 0"></div>
<div class="a" style="left:272px;top:590px;color:#495057">Operations</div>
<div class="a" style="left:383px;top:590px;color:#71639e">Additional Info</div>
<div class="a" style="left:519px;top:590px;color:#71639e">Note</div>
<div class="a" style="left:241px;top:633px;width:1411px;height:157px;border:5px solid #ec1b24"></div>
<div class="a" style="left:255px;top:639px;width:1383px;height:37px;background:#eeeeee;border-bottom:2px solid #e3e6ea"></div>
<div class="a" style="left:255px;top:676px;width:1383px;height:37px;background:#fbfbfb;border-bottom:1px solid #e3e6ea"></div>
<div class="a" style="left:255px;top:713px;width:1383px;height:37px;background:#fff;border-bottom:1px solid #e3e6ea"></div>
<div class="a" style="left:255px;top:750px;width:1383px;height:35px;background:#fbfbfb;border-bottom:1px solid #e3e6ea"></div>
<div class="a" style="left:532px;top:639px;width:1px;height:35px;background:#dde0e4"></div>
<div class="a" style="left:835px;top:639px;width:1px;height:35px;background:#dde0e4"></div>
<div class="a" style="left:992px;top:639px;width:1px;height:35px;background:#dde0e4"></div>
<div class="a" style="left:1006px;top:639px;width:1px;height:35px;background:#dde0e4"></div>
<div class="a" style="left:1164px;top:639px;width:1px;height:35px;background:#dde0e4"></div>
<div class="a" style="left:1321px;top:639px;width:1px;height:35px;background:#dde0e4"></div>
<div class="a" style="left:1526px;top:639px;width:1px;height:35px;background:#dde0e4"></div>
<div class="a" style="left:1584px;top:639px;width:1px;height:35px;background:#dde0e4"></div>
<div class="a" style="left:1598px;top:639px;width:1px;height:35px;background:#dde0e4"></div>
<div class="th" style="left:261px;top:649px">Product</div>
<div class="th" style="left:537px;top:649px">Kit</div>
<div class="th" style="right:946px;top:649px">Demand</div>
<div class="th" style="right:784px;top:649px">Reserved</div>
<div class="th" style="right:601px;top:649px">Done</div>
<div class="th" style="left:1327px;top:649px">Unit of Measure</div>
<div class="td" style="left:260px;top:686px">[FURN_7023] Wood Panel</div>
<div class="td" style="left:536px;top:686px">[FURN_78236] Table Kit - 1/2</div>
<div class="td" style="right:930px;top:686px">1.00</div>
<div class="td" style="right:785px;top:686px">1.00</div>
<div class="td" style="right:601px;top:686px">0.00</div>
<div class="td" style="left:1326px;top:686px">Units</div>
<div class="td" style="left:260px;top:722px">[CONS_89957] Bolt</div>
<div class="td" style="left:536px;top:722px">[FURN_78236] Table Kit - 2/2</div>
<div class="td" style="right:930px;top:722px">4.00</div>
<div class="td" style="right:785px;top:722px">4.00</div>
<div class="td" style="right:601px;top:722px">0.00</div>
<div class="td" style="left:1326px;top:722px">Units</div>
<div class="td" style="left:260px;top:758px;color:#71639e">Add a line</div>
<svg class="a" style="left:1142px;top:687px" width="20" height="14" viewBox="0 0 20 14"><path d="M1 0 V13.3 H19" fill="none" stroke="#71639e" stroke-width="1.4"/><path d="M3 11.8 V5.5 L6.3 1.9 L11.8 6.9 L15.4 4 L17.8 11.8 Z" fill="#71639e"/></svg>
<svg class="a" style="left:1539px;top:689px" width="18" height="14" viewBox="0 0 18 14"><g fill="#71639e"><rect x="0" y="0.2" width="2.7" height="2.4"/><rect x="3.8" y="0.2" width="13.4" height="2.4"/><rect x="0" y="3.8" width="2.7" height="2.4"/><rect x="3.8" y="3.8" width="13.4" height="2.4"/><rect x="0" y="7.1" width="2.7" height="2.4"/><rect x="3.8" y="7.1" width="13.4" height="2.4"/><rect x="0" y="10.6" width="2.7" height="2.4"/><rect x="3.8" y="10.6" width="13.4" height="2.4"/></g></svg>
<svg class="a" style="left:1539px;top:725px" width="18" height="14" viewBox="0 0 18 14"><g fill="#71639e"><rect x="0" y="0.2" width="2.7" height="2.4"/><rect x="3.8" y="0.2" width="13.4" height="2.4"/><rect x="0" y="3.8" width="2.7" height="2.4"/><rect x="3.8" y="3.8" width="13.4" height="2.4"/><rect x="0" y="7.1" width="2.7" height="2.4"/><rect x="3.8" y="7.1" width="13.4" height="2.4"/><rect x="0" y="10.6" width="2.7" height="2.4"/><rect x="3.8" y="10.6" width="13.4" height="2.4"/></g></svg>
<svg class="a" style="left:1602px;top:687px" width="13" height="15" viewBox="0 0 13 15"><g fill="none" stroke="#212529" stroke-width="1.05"><path d="M0.3 3.3 H12.7"/><path d="M4.3 3.3 V1.8 Q4.3 0.6 5.5 0.6 H7.5 Q8.7 0.6 8.7 1.8 V3.3"/><path d="M1.6 3.3 V12.6 Q1.6 13.6 2.6 13.6 H10.4 Q11.4 13.6 11.4 12.6 V3.3"/><path d="M4.5 5.3 V11.6 M6.5 5.3 V11.6 M8.5 5.3 V11.6"/></g></svg>
<svg class="a" style="left:1602px;top:723px" width="13" height="15" viewBox="0 0 13 15"><g fill="none" stroke="#212529" stroke-width="1.05"><path d="M0.3 3.3 H12.7"/><path d="M4.3 3.3 V1.8 Q4.3 0.6 5.5 0.6 H7.5 Q8.7 0.6 8.7 1.8 V3.3"/><path d="M1.6 3.3 V12.6 Q1.6 13.6 2.6 13.6 H10.4 Q11.4 13.6 11.4 12.6 V3.3"/><path d="M4.5 5.3 V11.6 M6.5 5.3 V11.6 M8.5 5.3 V11.6"/></g></svg>
<svg class="a" style="left:1627px;top:650px" width="5" height="13" viewBox="0 0 5 13"><g fill="#4c4c4c"><rect x="0.5" y="0" width="4" height="3.5"/><rect x="0.5" y="4.8" width="4" height="3.5"/><rect x="0.5" y="9.5" width="4" height="3.5"/></g></svg>

<div class="a" style="left:255px;top:818px;width:1383px;height:10px;background:#eeeeee"></div>
</body></html>
